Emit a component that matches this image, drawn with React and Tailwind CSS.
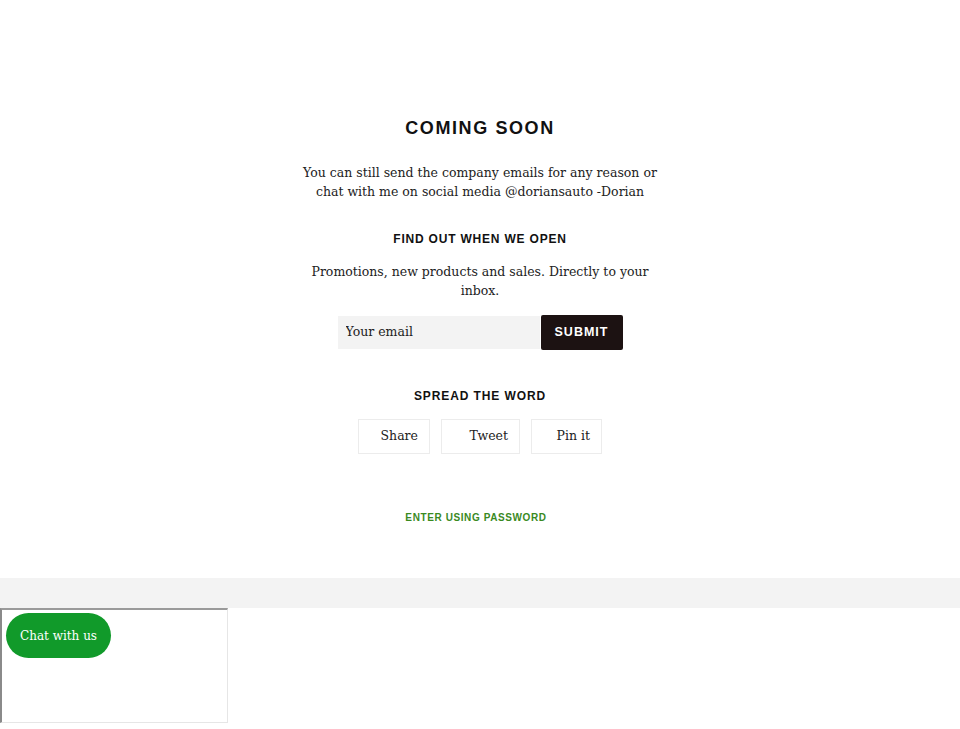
import React from 'react';

const serif = "font-['DejaVu_Serif',serif]";
const sans = "font-['Liberation_Sans',Arial,sans-serif]";

const ShareButton = ({ text, width }) => (
  <a href="#" className={`border border-[#ececec] pr-[11px] h-[35px] flex items-center justify-end text-[12.5px] text-[#222] ${serif} ${width}`}>
    {text}
  </a>
);

const App = () => {
  return (
    <div className="min-h-[729px] bg-white relative">
      <main className="flex flex-col items-center text-center pt-[118px] h-[578px]">
        <h1 className={`${sans} font-bold text-[18px] tracking-[1.6px] leading-[20px] text-[#111]`}>
          COMING SOON
        </h1>
        <p className={`${serif} text-[12.5px] leading-[19px] text-[#222] mt-[25px] w-[370px]`}>
          You can still send the company emails for any reason or chat with me on social media @doriansauto -Dorian
        </p>
        <h2 className={`${sans} font-bold text-[12px] tracking-[0.8px] leading-[16px] text-[#111] mt-[30px]`}>
          FIND OUT WHEN WE OPEN
        </h2>
        <p className={`${serif} text-[12.5px] leading-[19px] text-[#222] mt-[15px] w-[350px]`}>
          Promotions, new products and sales. Directly to your inbox.
        </p>
        <form className="flex items-center mt-[15px]" onSubmit={(e) => e.preventDefault()}>
          <input
            type="email"
            placeholder="Your email"
            className={`${serif} w-[202px] h-[33px] bg-[#f3f3f3] px-[8px] pb-[2px] text-[12.5px] placeholder:text-[#222] outline-none`}
          />
          <button className={`${sans} ml-[1px] h-[35px] w-[82px] bg-[#1c1212] text-white font-bold text-[12.5px] tracking-[1px] rounded-[2px]`}>
            SUBMIT
          </button>
        </form>
        <h2 className={`${sans} font-bold text-[12px] tracking-[0.9px] leading-[16px] text-[#111] mt-[38px]`}>
          SPREAD THE WORD
        </h2>
        <div className="flex gap-[11px] mt-[15px]">
          <ShareButton text="Share" width="w-[72px]" />
          <ShareButton text="Tweet" width="w-[79px]" />
          <ShareButton text="Pin it" width="w-[71px]" />
        </div>
        <a href="#" className={`${sans} font-bold text-[10px] tracking-[0.6px] text-[#3a8a1f] mt-[56px] mr-[8px]`}>
          ENTER USING PASSWORD
        </a>
      </main>
      <div className="h-[30px] bg-[#f3f3f3]" />
      <div className="w-[228px] h-[115px] border-l-2 border-t-2 border-l-[#8a8a8a] border-t-[#9a9a9a] border-r border-b border-r-[#e6e6e6] border-b-[#e6e6e6] pt-[3px] pl-[4px]">
        <button className={`${serif} bg-[#119a2a] text-white text-[12px] rounded-full w-[105px] h-[45px]`}>
          Chat with us
        </button>
      </div>
    </div>
  );
};

export default App;
